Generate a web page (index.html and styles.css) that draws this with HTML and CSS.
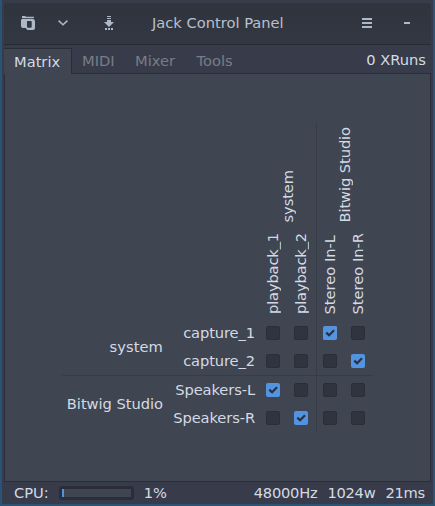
FILE: index.html
```html
<!DOCTYPE html>
<html lang="en">
<head>
<meta charset="utf-8">
<title>Jack Control Panel</title>
<link rel="stylesheet" href="styles.css">
</head>
<body>
<div class="window">
  <header class="titlebar">
    <svg class="ico-session" width="14" height="14" viewBox="0 0 14 14"><path fill="currentColor" fill-rule="evenodd" d="M1 0h3l1 .7h8V2H1zM1.500 2.700H11.500Q14 3 14 5.500V12Q14 14 12 14H7Q5.300 14 5 12H2Q0 12 0 10V4.200Q0 2.700 1.500 2.700zM6.500 5L6 5.500V11l.7.700H10L10.700 11V5.500L10.200 5z"/></svg>
    <svg class="ico-chevron" width="10" height="6" viewBox="0 0 10 6"><path fill="none" stroke="currentColor" stroke-width="1.500" d="M.6.6L5 4.800 9.400.6"/></svg>
    <svg class="ico-down" width="10" height="14" viewBox="0 0 10 14"><path fill="currentColor" d="M3 0h4v1H3zM3 2h4v1H3zM3 4h4v2h3L5 11 0 6h3zM1 12h2v2H1zM4 12h2v2H4zM7 12h2v2H7z"/></svg>
    <h1 class="title">Jack Control Panel</h1>
    <svg class="ico-menu" width="10" height="10" viewBox="0 0 10 10"><path fill="currentColor" d="M0 0h10v2H0zM0 4h10v2H0zM0 8h10v2H0z"/></svg>
    <svg class="ico-min" width="6" height="2" viewBox="0 0 6 2"><path fill="currentColor" d="M0 0h6v2H0z"/></svg>
  </header>
  <nav class="tabs">
    <span class="tab active">Matrix</span>
    <span class="tab">MIDI</span>
    <span class="tab mixer">Mixer</span>
    <span class="tab last">Tools</span>
    <span class="xruns">0 XRuns</span>
  </nav>
  <main class="page">
    <div class="matrix">
      <span class="vgroup sys">system</span>
      <span class="vgroup bit">Bitwig Studio</span>
      <span class="vport play c3">playback_1</span>
      <span class="vport play c4">playback_2</span>
      <span class="vport c6">Stereo In-L</span>
      <span class="vport c7">Stereo In-R</span>
      <span class="vline"></span>
      <span class="hline"></span>

      <span class="group g1">system</span>
      <span class="group g2">Bitwig Studio</span>

      <span class="port r3">capture_1</span>
      <i class="box c3 r3"></i><i class="box c4 r3"></i>
      <i class="box c6 r3 on focus"><svg viewBox="0 0 14 14"><path d="M3.300 6.600L6.100 9.300 11 4.300"/></svg></i><i class="box c7 r3"></i>

      <span class="port r4">capture_2</span>
      <i class="box c3 r4"></i><i class="box c4 r4"></i><i class="box c6 r4"></i>
      <i class="box c7 r4 on"><svg viewBox="0 0 14 14"><path d="M3.300 6.600L6.100 9.300 11 4.300"/></svg></i>

      <span class="port r6">Speakers-L</span>
      <i class="box c3 r6 on"><svg viewBox="0 0 14 14"><path d="M3.300 6.600L6.100 9.300 11 4.300"/></svg></i>
      <i class="box c4 r6"></i><i class="box c6 r6"></i><i class="box c7 r6"></i>

      <span class="port r7">Speakers-R</span>
      <i class="box c3 r7"></i>
      <i class="box c4 r7 on"><svg viewBox="0 0 14 14"><path d="M3.300 6.600L6.100 9.300 11 4.300"/></svg></i>
      <i class="box c6 r7"></i><i class="box c7 r7"></i>
    </div>
  </main>
  <footer class="status">
    <span>CPU:</span>
    <span class="meter"><span class="fill"></span></span>
    <span>1%</span>
    <span class="rate">48000Hz</span>
    <span class="frames">1024w</span>
    <span class="latency">21ms</span>
  </footer>
</div>
</body>
</html>
```
FILE: styles.css
```css
* { box-sizing: border-box; }
body {
  margin: 0;
  font: 14.667px/18px "DejaVu Sans", sans-serif;
  color: #d3dae3;
}
.window {
  width: 435px;
  height: 506px;
  display: flex;
  flex-direction: column;
  background: #383c4a;
  border: 2px solid #285577;
  border-top: 0;
  padding: 3px 2px 0;
}
.titlebar {
  height: 42px;
  flex: none;
  display: flex;
  align-items: center;
  background: linear-gradient(#2f343f, #323742);
  border-bottom: 1px solid #262a33;
  border-radius: 3px 3px 0 0;
  color: #afb8c6;
  padding: 0 21px 1px 17px;
}
.ico-chevron { margin-left: 23px; }
.ico-down { margin-left: 36px; }
.title {
  margin: 0 0 0 38px;
  font-size: inherit;
  font-weight: normal;
  color: #b8c0cd;
}
.ico-menu { margin-left: auto; }
.ico-min { margin-left: 32px; }
.tabs {
  height: 29px;
  flex: none;
  display: flex;
  align-items: flex-end;
  border-bottom: 1px solid #2b2e39;
}
.tab {
  height: 25px;
  padding: 4px 10px 0;
  color: #777c87;
}
.tab.mixer { margin-left: .5px; }
.tab.last { margin-left: 1.5px; }
.tab.active {
  height: 26px;
  padding-top: 4px;
  margin: 0 0 -1px;
  width: 68px;
  background: #404552;
  border: 1px solid #2b2e39;
  border-width: 1px 1px 0 0;
  color: #d3dae3;
}
.xruns { margin: 0 5px 4px auto; }
.page {
  height: 408px;
  flex: none;
  background: #404552;
  border: 1px solid #2b2e39;
  border-top: 0;
  padding: 48px 0 0 57px;
}
.matrix {
  display: grid;
  grid-template-columns: 101px 96px 28px 28px 1px 28px 28px;
  grid-template-rows: 104px 93px 28px 28px 1px 28px 28px;
}
.vgroup, .vport {
  writing-mode: vertical-rl;
  transform: rotate(180deg);
  white-space: nowrap;
  justify-self: center;
  align-self: end;
}
.vgroup { grid-row: 1; padding-top: 3px; letter-spacing: -.08px; margin-left: 2px; }
.vport { grid-row: 2; padding-top: 5px; }
.play { letter-spacing: -.15px; }
.sys { grid-column: 3 / 5; }
.bit { grid-column: 6 / 8; }
.vline, .hline { background: #383c47; }
.vline { grid-area: 1 / 5 / 8 / 6; margin: 0 -1px 0 1px; }
.hline { grid-area: 5 / 1 / 6 / 8; margin-right: -1px; }
.group {
  grid-column: 1;
  justify-self: end;
  align-self: center;
}
.g1 { grid-row: 3 / 5; letter-spacing: .1px; }
.g2 { grid-row: 6 / 8; letter-spacing: -.03px; }
.port {
  grid-column: 2;
  justify-self: end;
  align-self: center;
  padding-right: 4px;
  letter-spacing: -.1px;
}
.c3 { grid-column: 3; }
.c4 { grid-column: 4; }
.c6 { grid-column: 6; }
.c7 { grid-column: 7; }
.r3 { grid-row: 3; }
.r4 { grid-row: 4; }
.r6 { grid-row: 6; }
.r7 { grid-row: 7; }
.box {
  width: 14px;
  height: 14px;
  place-self: center;
  background: #2f343f;
  border: 1px solid #2a2e38;
  border-radius: 2px;
}
.box.on { background: #5294e2; border: 0; }
.box svg { display: block; width: 14px; height: 14px; }
.box path { fill: none; stroke: #2b303b; stroke-width: 2.200; }
.focus { outline: 1px dashed #6a93c8; outline-offset: -1px; }
.status {
  flex: 1;
  display: flex;
  align-items: center;
  padding: 0 6px 0 10px;
}
.meter {
  width: 75px;
  height: 14px;
  margin: 0 10px;
  background: #404552;
  border: 3px solid #2b2e39;
  border-radius: 3px;
}
.fill { display: block; width: 2px; height: 8px; background: #5294e2; }
.rate, .frames, .latency { letter-spacing: -.25px; }
.rate { margin-left: auto; }
.rate, .frames { margin-right: 10px; }
```
